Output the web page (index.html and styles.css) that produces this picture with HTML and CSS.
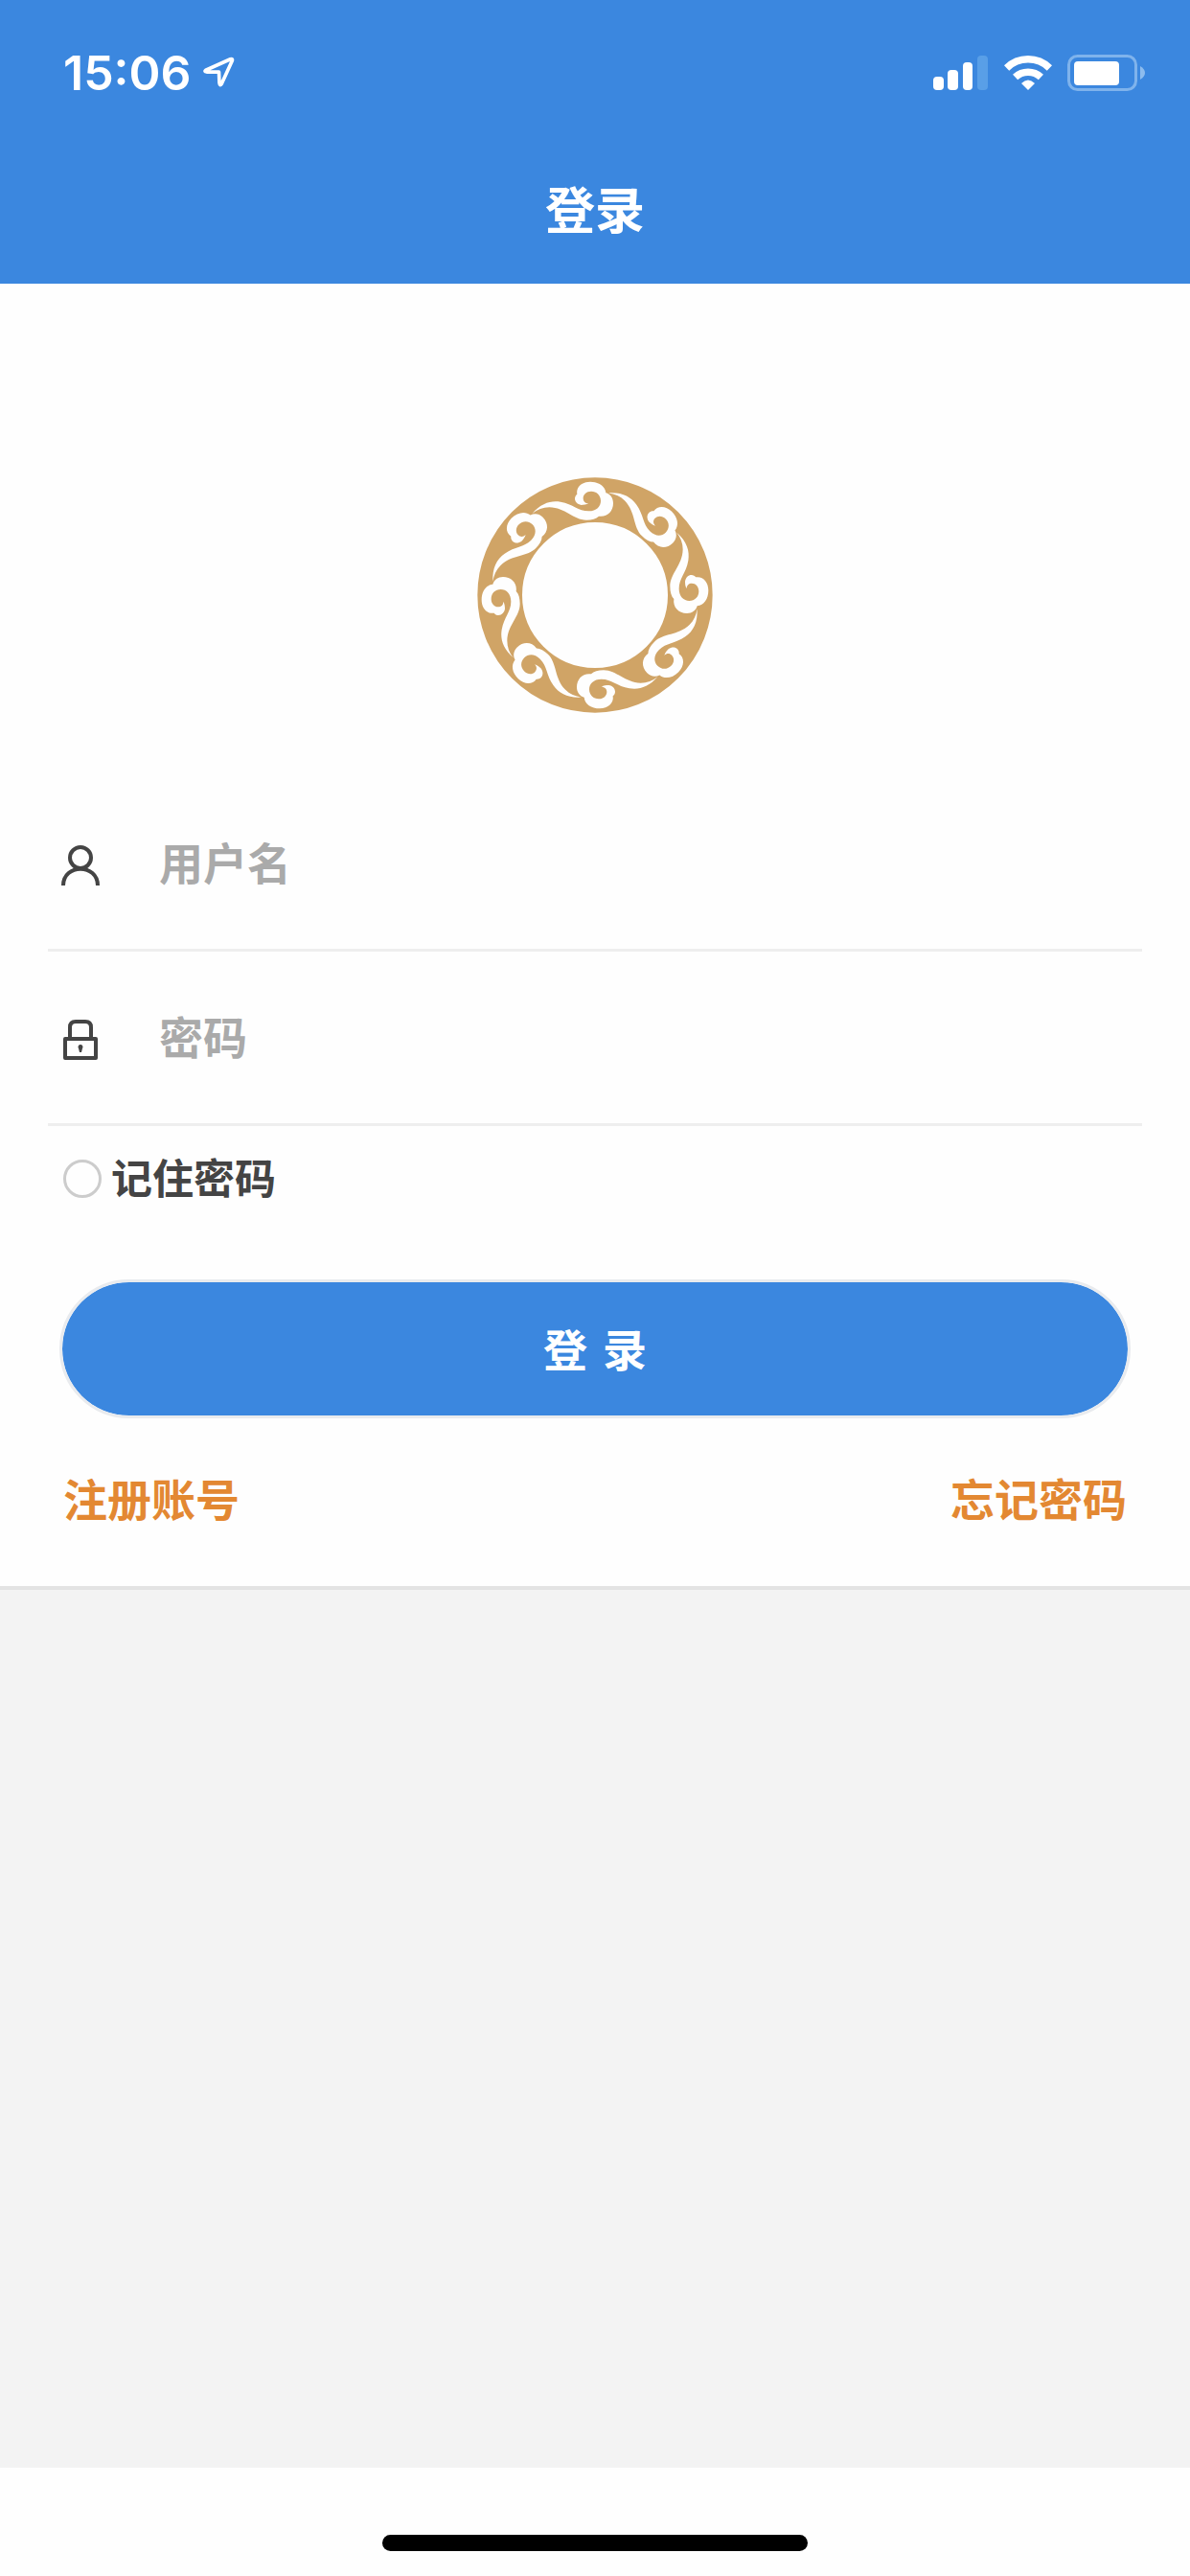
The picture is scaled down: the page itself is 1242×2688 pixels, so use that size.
FILE: index.html
```html
<!DOCTYPE html>
<html lang="zh-CN">
<head>
<meta charset="utf-8">
<meta name="viewport" content="width=device-width, initial-scale=1">
<title>登录</title>
<link rel="stylesheet" href="styles.css">
</head>
<body class="page">
<header class="header">
  <div class="status">
    <div class="status-left">
      <span class="time">15:06</span>
      <svg class="locate" width="33" height="33" viewBox="0 0 36 36" aria-hidden="true">
        <path d="M3 15.500 L31 3 Q34 2 33 5 L21 31 Q19 34 18.500 30 L18 17.500 L4 17.500 Q1 17 3 15.500Z" fill="none" stroke="#fff" stroke-width="4" stroke-linejoin="round"/>
      </svg>
    </div>
    <div class="status-right">
      <svg width="58" height="38" viewBox="0 0 58 38" aria-hidden="true">
        <g fill="#fff">
          <rect x="0" y="23" width="11" height="14" rx="4"/>
          <rect x="15" y="16" width="11" height="21" rx="4"/>
          <rect x="31" y="8" width="10" height="29" rx="4"/>
        </g>
        <rect x="46" y="1" width="11" height="36" rx="4" fill="#599fe7"/>
      </svg>
      <svg width="50" height="38" viewBox="0 0 50 38" aria-hidden="true">
        <g fill="none" stroke="#fff" stroke-width="7.5">
          <path d="M2.600 14 A32 32 0 0 1 47.400 14"/>
          <path d="M11.600 23.500 A19.500 19.500 0 0 1 38.400 23.500"/>
        </g>
        <path d="M18 30 Q25 23 32 30 L25 37Z" fill="#fff"/>
      </svg>
      <svg width="82" height="38" viewBox="0 0 82 38" aria-hidden="true">
        <rect x="1.500" y="1.500" width="70" height="35" rx="9" fill="none" stroke="#7fb3ec" stroke-width="3"/>
        <rect x="7" y="7" width="47" height="25" rx="4" fill="#fff"/>
        <path d="M76 12 Q81 15 81 19 T76 26Z" fill="#8dbcee"/>
      </svg>
    </div>
  </div>
  <h1 class="title">登录</h1>
</header>

<main class="panel">
  <svg class="logo" viewBox="24 24 738 738" aria-hidden="true">
    <defs>
      <path id="cloud" d="M197 137 C225 105 255 96 285 101 C325 108 340 130 373 130 C398 130 411 115 411 98 C411 80 398 68 381 68 C366 68 356 78 356 90 C356 99 362 106 373 106 C366 110 358 111 350 111 C338 109 330 101 330 91 C330 85 333 80 337 77 C333 55 352 38 378 38 C405 38 425 52 427 73 C441 77 450 89 450 105 C450 132 430 150 405 146 C397 154 383 158 366 158 C325 158 300 119 250 118 C230 118 212 125 197 137Z"/>
    </defs>
    <circle cx="393" cy="393" r="298" fill="none" stroke="#d0a466" stroke-width="140"/>
    <g fill="#fefefe">
      <use href="#cloud"/>
      <use href="#cloud" transform="rotate(45 393 393)"/>
      <use href="#cloud" transform="rotate(90 393 393)"/>
      <use href="#cloud" transform="rotate(135 393 393)"/>
      <use href="#cloud" transform="rotate(180 393 393)"/>
      <use href="#cloud" transform="rotate(225 393 393)"/>
      <use href="#cloud" transform="rotate(270 393 393)"/>
      <use href="#cloud" transform="rotate(315 393 393)"/>
    </g>
  </svg>

  <form class="form">
    <div class="field">
      <label class="field-icon" for="user" aria-label="用户名">
        <svg width="40" height="44" viewBox="0 0 40 44" aria-hidden="true">
          <g fill="none" stroke="#444" stroke-width="4">
            <circle cx="20" cy="14" r="11"/>
            <path d="M2 43 C2 20 38 20 38 43"/>
          </g>
        </svg>
      </label>
      <input class="field-input" id="user" type="text" placeholder="用户名">
    </div>
    <div class="field">
      <label class="field-icon" for="pass" aria-label="密码">
        <svg width="40" height="44" viewBox="0 0 40 44" aria-hidden="true">
          <g fill="none" stroke="#444" stroke-width="4" stroke-linejoin="round">
            <rect x="4" y="21" width="32" height="20"/>
            <path d="M9 20 V9 Q9 3 15 3 H25 Q31 3 31 9 V20"/>
          </g>
          <path d="M20 27 A2.500 2.500 0 0 1 22 31 L21 35 H19 L18 31 A2.500 2.500 0 0 1 20 27Z" fill="#444"/>
        </svg>
      </label>
      <input class="field-input" id="pass" type="password" placeholder="密码">
    </div>
    <div class="remember">
      <input class="remember-box" id="remember" type="checkbox">
      <label class="remember-label" for="remember">记住密码</label>
    </div>
    <button class="submit" type="submit">登 录</button>
    <nav class="links">
      <a class="link" href="#register">注册账号</a>
      <a class="link" href="#forgot">忘记密码</a>
    </nav>
  </form>
</main>

<footer class="footer"><div class="home-bar"></div></footer>
</body>
</html>
```
FILE: styles.css
```css
* { box-sizing: border-box; }

.page {
  margin: 0;
  min-height: 100vh;
  display: flex;
  flex-direction: column;
  background: #f3f3f3;
  color: #444;
  font-family: Inter, "Noto Sans CJK SC", sans-serif;
  font-weight: 700;
  font-size: 46px;
}

.header {
  background: #3b87df;
  color: #fff;
  padding-bottom: 37px;
}

.status {
  display: flex;
  justify-content: space-between;
  align-items: center;
  height: 151px;
  padding: 0 46px 0 66px;
}

.status-left,
.status-right {
  display: flex;
  align-items: center;
}

.status-left { gap: 12px; }
.status-right { gap: 16px; }

.time {
  font-size: 50px;
  line-height: 60px;
  font-weight: 600;
}

.title {
  margin: 0;
  padding-top: 32px;
  font-size: 52px;
  line-height: 76px;
  font-weight: 700;
  text-align: center;
}

.panel {
  display: flex;
  flex-direction: column;
  background: #fefefe;
  border-bottom: 4px solid #e3e3e3;
  padding: 202px 50px 55px;
}

.logo {
  align-self: center;
  width: 246px;
  height: 246px;
  margin-bottom: 67px;
}

.form {
  display: flex;
  flex-direction: column;
}

.field {
  display: flex;
  align-items: center;
  gap: 62px;
  height: 182px;
  padding-left: 14px;
  border-bottom: 3px solid #eee;
}

.field-icon {
  display: flex;
  padding-top: 4px;
}

.field-input {
  flex: 1;
  min-width: 0;
  height: 100%;
  padding: 0;
  border: 0;
  outline: 0;
  background: none;
  color: #444;
  font: inherit;
}

.field-input::placeholder {
  color: #aaa;
  opacity: 1;
}

.remember {
  display: flex;
  align-items: center;
  gap: 10px;
  height: 110px;
  padding-left: 16px;
  font-size: 43px;
}

.remember-label { padding-bottom: 6px; }

.remember-box {
  appearance: none;
  width: 40px;
  height: 40px;
  margin: 0;
  border: 3px solid #ccc;
  border-radius: 50%;
}

.remember-box:checked { background: #3b87df; }

.submit {
  height: 145px;
  margin: 50px 12px 0;
  padding: 0 0 4px;
  border: 3px solid #e9ebee;
  border-radius: 73px;
  background: #3b87df;
  background-clip: padding-box;
  color: #fff;
  font-family: "DejaVu Sans", "Noto Sans CJK SC", sans-serif;
  font-weight: 700;
  font-size: 46px;
}

.links {
  display: flex;
  justify-content: space-between;
  margin-top: 50px;
  padding: 0 16px;
  line-height: 70px;
}

.link {
  color: #e38832;
  text-decoration: none;
}

.footer {
  display: flex;
  justify-content: center;
  align-items: flex-end;
  height: 113px;
  margin-top: auto;
  padding-bottom: 26px;
  background: #fefefe;
}

.home-bar {
  width: 444px;
  max-width: 60%;
  height: 17px;
  border-radius: 9px;
  background: #000;
}
```
